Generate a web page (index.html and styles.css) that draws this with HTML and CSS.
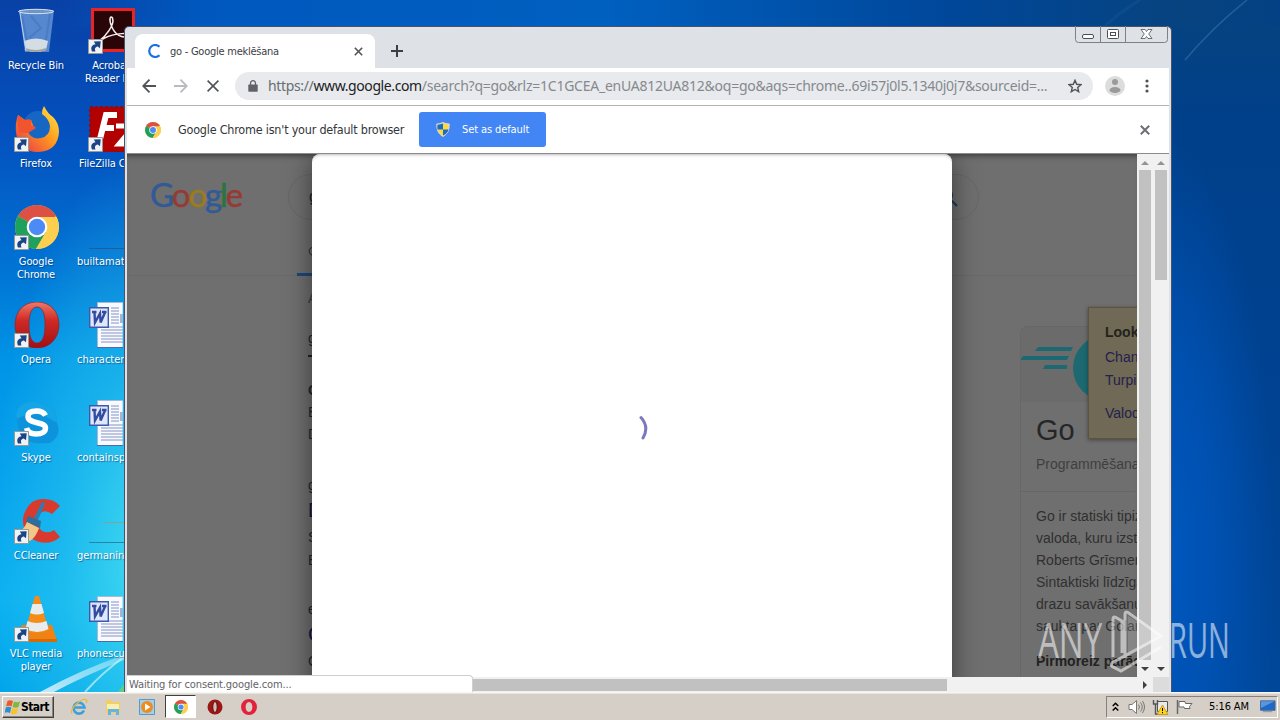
FILE: index.html
```html
<!DOCTYPE html>
<html lang="lv">
<head>
    <meta charset="UTF-8">
    <meta name="viewport" content="width=device-width, initial-scale=1.0">
    <title>go - Google meklēšana</title>
    <link rel="stylesheet" href="styles.css">
</head>
<body>
    <!-- shared icons -->
    <svg class="defs" width="0" height="0">
        <symbol id="i-shortcut" viewBox="0 0 15 15">
            <path d="M0.5 0.5h14v14h-14z" fill="#eef3f8" stroke="#9a9a94"/>
            <path d="M4 12.500C2.200 8.500 4 5.500 7.500 5.200L5.800 2.500l6.900-.2L12 9.300 9.800 7.500C6.800 8 6.500 10 7.500 12.500z" fill="#1c4484"/>
        </symbol>
        <symbol id="i-chrome" viewBox="0 0 44 44">
            <circle cx="22" cy="22" r="22" fill="#f8cd4a"/>
            <path d="M22 22L3 11A22 22 0 0 1 41.100 11z" fill="#dd5044"/>
            <path d="M22 22L3 11A22 22 0 0 0 21 44L31 27z" fill="#1fa15d"/>
            <path d="M22 12h19.500A22 22 0 0 1 21 44l10-17z" fill="#fcd04e"/>
            <circle cx="22" cy="22" r="10.300" fill="#fff"/>
            <circle cx="22" cy="22" r="8.200" fill="#4c8bf5"/>
        </symbol>
        <symbol id="i-word" viewBox="0 0 34 46">
            <path d="M8.500.5H34v45H8.500z" fill="#f8faff" stroke="#a9b8d8"/>
            <path d="M22 6h8M22 9h8M22 12h8M22 15h8M22 18h8M22 21h8M12 25h22M12 28h22M12 31h22M12 34h22M12 37h22M12 40h22" stroke="#8494c4"/>
            <path d="M31 12h3v9h-3z" fill="#a5b3d6"/>
            <path d="M8 45.500h26" stroke="#4d69aa"/>
            <path d="M.7 5.700h18.600v19.600H.7z" fill="#dfe7fa" stroke="#3d58ad" stroke-width="1.400"/>
            <path d="M3 10h4.500M13 10h4.500M5.500 10.500L6 20.500 11 11.500 11.600 20.500 16 10.500" fill="none" stroke="#334ca1" stroke-width="2.400"/>
        </symbol>
        <symbol id="i-magnifier" viewBox="0 0 20 20">
            <path d="M13 13l6 6M14 8A6 6 0 1 1 2 8a6 6 0 0 1 12 0z" fill="none" stroke="currentColor" stroke-width="2"/>
        </symbol>
    </svg>

    <div class="screen">
        <main class="desktop">
            <svg class="wallpaper" width="1280" height="692">
                <defs>
                    <linearGradient id="beam" x1="0" y1="1" x2="1" y2="0">
                        <stop offset="0" stop-color="#fff" stop-opacity=".75"/>
                        <stop offset="1" stop-color="#fff" stop-opacity=".3"/>
                    </linearGradient>
                </defs>
                <path d="M40 692Q80 670 124 655v5Q86 675 54 692z" fill="url(#beam)"/>
                <path d="M85 692Q103 672 124 657" fill="none" stroke="#c8f3fc" stroke-width="2" opacity=".7"/>
                <path d="M118 692l6-8v8z" fill="#5ad08c"/>
                <path d="M1247 0Q1212 28 1185 60" fill="none" stroke="#4d8cc2" stroke-width="1.500" opacity=".4"/>
                <path d="M1140 0Q1120 12 1105 26" fill="none" stroke="#3878b8" stroke-width="3" opacity=".15"/>
            </svg>

            <div class="icons">
                <div class="icon">
                    <svg class="pic" width="46" height="46" viewBox="0 0 46 46">
                        <path d="M5 2h35l-5 42H11z" fill="#6f9fdb" opacity=".75"/>
                        <path d="M8 8l6 30M36 6l-5 32M17 8l10 12-12 10" fill="none" stroke="#3e6fba" stroke-width="2" opacity=".5"/>
                        <path d="M10 33q12-5 24 0l-2 9q-10 4-20 0z" fill="#d5dde4"/>
                        <path d="M11 41q11 4 21 0" stroke="#a6a39c" stroke-width="2" fill="none"/>
                        <ellipse cx="22" cy="3.500" rx="17.500" ry="2.200" fill="#7095c6" stroke="#d7e4f2"/>
                        <path d="M6 5l6 38" stroke="#bdd3ee"/>
                    </svg>
                    <span>Recycle Bin</span>
                </div>
                <div class="icon">
                    <svg class="pic" width="46" height="46" viewBox="0 0 46 46">
                        <defs>
                            <linearGradient id="fox" x1="1" y1="0" x2="0" y2="1">
                                <stop offset="0" stop-color="#fff14a"/><stop offset=".45" stop-color="#ff9a1e"/><stop offset="1" stop-color="#e62a50"/>
                            </linearGradient>
                        </defs>
                        <circle cx="24" cy="20" r="15" fill="#1667c4"/>
                        <path d="M4 9l7 5 6 0 3 8-6 4q4 8 13 6 9-2 9-12Q35 13 28 8q0-5 2-8 4 8 9 11 6 6 6 15-1 19-21 20Q5 46 2 27 1 17 4 9z" fill="url(#fox)"/>
                        <path d="M4 9l7 5q5-2 7 1l-1 4q4 1 5 3l-8 5H6q-4-9-2-18z" fill="#f2542f"/>
                    </svg>
                    <svg class="shortcut"><use href="#i-shortcut"/></svg>
                    <span>Firefox</span>
                </div>
                <div class="icon">
                    <svg class="pic" width="46" height="46" viewBox="-1 -1 46 46"><use href="#i-chrome" width="44" height="44"/></svg>
                    <svg class="shortcut"><use href="#i-shortcut"/></svg>
                    <span>Google<br>Chrome</span>
                </div>
                <div class="icon">
                    <svg class="pic" width="46" height="46" viewBox="0 0 46 46">
                        <defs>
                            <linearGradient id="op" x1="0" y1="0" x2="0" y2="1">
                                <stop offset="0" stop-color="#ee7a68"/><stop offset=".4" stop-color="#cf2a25"/><stop offset="1" stop-color="#a30f12"/>
                            </linearGradient>
                        </defs>
                        <path fill-rule="evenodd" d="M23 0C37 0 45 10 45 23S36 46 23 46 1 36 1 23 9 0 23 0zM23 5c-6 0-8 8-8 18s2 18 8 18 8-8 8-18-2-18-8-18z" fill="url(#op)" stroke="#8a2330" stroke-width=".7"/>
                    </svg>
                    <svg class="shortcut"><use href="#i-shortcut"/></svg>
                    <span>Opera</span>
                </div>
                <div class="icon">
                    <svg class="pic" width="46" height="46" viewBox="0 0 46 46">
                        <path d="M14 2q6-2 11 1 18 1 18 20 3 7 0 13-5 9-15 7Q7 45 4 25-1 8 14 2z" fill="#0c93dc"/>
                        <path d="M14 2q6-2 11 1 18 1 18 20Q22 8 3 19 0 7 14 2z" fill="#14a5e6"/>
                        <path d="M31.500 15.500Q29 11 22.500 11C17 11 14 13 14 16.500c0 8 17.500 4.500 17.500 11.500 0 4-4 6-9 6-5.500 0-9-2-10-6" fill="none" stroke="#fff" stroke-width="5.500"/>
                    </svg>
                    <svg class="shortcut"><use href="#i-shortcut"/></svg>
                    <span>Skype</span>
                </div>
                <div class="icon">
                    <svg class="pic" width="46" height="46" viewBox="0 0 46 46">
                        <path d="M46 8L38 16Q30 10 25 17q-4 10 3 16 7 3 12-1l6 7Q37 47 25 44 8 38 9 20 14 0 30 1q10 0 16 7z" fill="#d93a2e"/>
                        <path d="M28 4l3 1-7 17-4-2z" fill="#287fb5"/>
                        <path d="M14 18l13 5-1 7-14-6z" fill="#2e6e9c"/>
                        <path d="M13 24l12 6q-3 9-9 13L2 36q8-4 11-12z" fill="#f3c786"/>
                    </svg>
                    <svg class="shortcut"><use href="#i-shortcut"/></svg>
                    <span>CCleaner</span>
                </div>
                <div class="icon">
                    <svg class="pic" width="46" height="46" viewBox="0 0 46 46">
                        <path d="M8 29h30l5 16H2z" fill="#ef8212"/>
                        <path d="M2 43h41v3H2z" fill="#d86a06"/>
                        <path d="M21 0h4l9.500 34q-11 6-23 0z" fill="#f58c17"/>
                        <path d="M18.500 8h9l2.500 9q-7 3-14 0zM13.500 25q9 4 19 0l2 8q-11 6-23 0z" fill="#e9ecef"/>
                    </svg>
                    <svg class="shortcut"><use href="#i-shortcut"/></svg>
                    <span>VLC media<br>player</span>
                </div>
            </div>

            <div class="icons second">
                <div class="icon">
                    <svg class="pic" width="46" height="46" viewBox="0 0 46 46">
                        <path d="M3.500 1.500h41v41h-41z" fill="#2a0507" stroke="#ed2224" stroke-width="3"/>
                        <path d="M10 33c6-4 16-16 13.500-23-2-3-4 1-1 8 3 8 10 13 17 10 4-4-14-3-24 2-7 4-8 7-5 6z" fill="none" stroke="#f6efef" stroke-width="1.500"/>
                    </svg>
                    <svg class="shortcut"><use href="#i-shortcut"/></svg>
                    <span>Acrobat<br>Reader DC</span>
                </div>
                <div class="icon">
                    <svg class="pic" width="46" height="46" viewBox="0 0 46 46">
                        <path d="M1 1h45v45H1z" fill="#b30000" stroke="#8e0c12" stroke-dasharray="3 2" stroke-width="2"/>
                        <path d="M28 9H17L10 37M14 22h11" fill="none" stroke="#fff" stroke-width="6"/>
                        <path d="M27 20h18L30 38h16" fill="none" stroke="#fff" stroke-width="5"/>
                    </svg>
                    <svg class="shortcut"><use href="#i-shortcut"/></svg>
                    <span class="filezilla">FileZilla Client</span>
                </div>
                <div class="icon doc">
                    <svg class="pic" width="46" height="46"><path d="M0 44.500h46" stroke="#1c5f9b"/></svg>
                    <span>builtamateur.r</span>
                </div>
                <div class="icon doc">
                    <svg class="pic" width="34" height="46"><use href="#i-word"/></svg>
                    <span>characterpr.</span>
                </div>
                <div class="icon doc">
                    <svg class="pic" width="34" height="46"><use href="#i-word"/></svg>
                    <span>containspubli</span>
                </div>
                <div class="icon doc">
                    <svg class="pic" width="46" height="46"><path d="M14 24.500h32" stroke="#7da69b"/><path d="M0 44.500h46" stroke="#2585ab"/></svg>
                    <span>germaninter</span>
                </div>
                <div class="icon doc">
                    <svg class="pic" width="34" height="46"><use href="#i-word"/></svg>
                    <span>phonescultur</span>
                </div>
            </div>

            <section class="window">
                <header class="tabstrip">
                    <div class="tab">
                        <svg width="14" height="14" viewBox="0 0 14 14"><path d="M11.500 2.800A6 6 0 1 0 11.500 11.200" fill="none" stroke="#1d6fe0" stroke-width="2.200"/></svg>
                        <span class="tab-title">go - Google meklēšana</span>
                        <svg width="9" height="9" viewBox="0 0 9 9"><path d="M.8.8l7.400 7.400M8.200.8L.8 8.200" stroke="#505357" stroke-width="1.600"/></svg>
                    </div>
                    <svg class="new-tab" width="12" height="12" viewBox="0 0 12 12"><path d="M6 0v12M0 6h12" stroke="#3c4043" stroke-width="2"/></svg>
                    <svg class="controls" width="93" height="18" viewBox="0 0 93 18">
                        <path d="M.5 0v13.500q0 3 3 3h86q3 0 3-3V0M25.500 0v16.500M50.500 0v16.500" fill="none" stroke="#7d8187"/>
                        <rect x="7.500" y="8.500" width="11" height="4" rx="1.500" fill="#fff" stroke="#4b4f55"/>
                        <rect x="32.500" y="3.500" width="11" height="9" rx="1" fill="#fff" stroke="#4b4f55"/>
                        <rect x="35.500" y="6.500" width="5" height="3" fill="#fff" stroke="#4b4f55"/>
                        <path d="M66 3.500h4L71.500 5.500l1.500-2h4l-3.300 4.500 3.300 4.500h-4L71.500 10.500l-1.500 2h-4l3.300-4.500z" fill="#fff" stroke="#4b4f55" stroke-width=".8"/>
                    </svg>
                </header>

                <nav class="toolbar">
                    <svg width="14" height="14" viewBox="0 0 14 14"><path d="M14 7H1.500M7.500.7L1.200 7l6.300 6.300" fill="none" stroke="#505357" stroke-width="1.800"/></svg>
                    <svg width="14" height="14" viewBox="0 0 14 14"><path d="M0 7h12.500M6.500.7L12.800 7l-6.300 6.300" fill="none" stroke="#b9bbbe" stroke-width="1.800"/></svg>
                    <svg width="12" height="12" viewBox="0 0 12 12"><path d="M.6.600l10.800 10.800M11.400.6L.6 11.400" stroke="#505357" stroke-width="1.600"/></svg>
                    <div class="omnibox">
                        <svg width="10" height="12" viewBox="0 0 10 12"><path d="M1 4.500h8q.7 0 .7.700V11q0 .8-.7.8H1q-.7 0-.7-.8V5.200q0-.7.7-.7z" fill="#5f6368"/><path d="M2.500 5V3.200a2.500 2.500 0 0 1 5 0V5" fill="none" stroke="#5f6368" stroke-width="1.300"/></svg>
                        <span class="url"><i class="scheme">https://</i><b>www.google.com</b><i class="path">/search?q=go&amp;rlz=1C1GCEA_enUA812UA812&amp;oq=go&amp;aqs=chrome..69i57j0l5.1340j0j7&amp;sourceid=...</i></span>
                        <svg width="14" height="14" viewBox="0 0 14 14"><path d="M7 1.300l1.700 4 4.300.4-3.300 2.800 1 4.200L7 10.500l-3.700 2.200 1-4.200L1 5.700l4.300-.4z" fill="none" stroke="#505357" stroke-width="1.400"/></svg>
                    </div>
                    <svg class="avatar" width="20" height="20" viewBox="0 0 20 20"><circle cx="10" cy="10" r="10" fill="#dcdcdc"/><circle cx="10" cy="6" r="3" fill="#9a9a9a"/><ellipse cx="10" cy="14" rx="5.500" ry="3" fill="#9a9a9a"/></svg>
                    <svg class="menu-dots" width="4" height="14" viewBox="0 0 4 14"><circle cx="2" cy="2" r="1.600" fill="#505357"/><circle cx="2" cy="7" r="1.600" fill="#505357"/><circle cx="2" cy="12" r="1.600" fill="#505357"/></svg>
                </nav>

                <div class="infobar">
                    <svg width="16" height="16"><use href="#i-chrome"/></svg>
                    <span class="info-text">Google Chrome isn't your default browser</span>
                    <button class="set-default">
                        <svg width="14" height="15" viewBox="0 0 14 15">
                            <path d="M7 .5Q4 2 .8 2 .3 11 7 14.500 13.700 11 13.200 2 10 2 7 .5z" fill="#ffd93b" stroke="#d5dbe6"/>
                            <path d="M7 1.500V7.500H1.500Q1.200 5 1.500 2.800 4.500 2.600 7 1.500zM7 7.500h5.500Q11.500 11.500 7 13.500z" fill="#1a6cc8"/>
                        </svg>
                        <span>Set as default</span>
                    </button>
                    <svg class="info-close" width="10" height="10" viewBox="0 0 10 10"><path d="M.8.8l8.400 8.400M9.200.8L.8 9.200" stroke="#6c6f73" stroke-width="2"/></svg>
                </div>

                <div class="viewport">
                    <div class="page">
                        <div class="page-header">
                            <div class="logo"><span class="g-blue">G</span><span class="g-red">o</span><span class="g-yellow">o</span><span class="g-blue">g</span><span class="g-green">l</span><span class="g-red">e</span></div>
                            <div class="search"><span>go</span><svg width="20" height="20"><use href="#i-magnifier"/></svg></div>
                            <div class="search-tabs"><svg width="13" height="13"><use href="#i-magnifier"/></svg></div>
                        </div>
                        <div class="page-body">
                            <div class="results">
                                <p class="stats">Aptuveni</p>
                                <p class="cite first">golang.org</p>
                                <div class="rule"></div>
                                <p class="strong">Go</p>
                                <p class="snippet">Build fast</p>
                                <p class="snippet">Download</p>
                                <p class="cite second-hit">golang.org</p>
                                <p class="heading">Downloads</p>
                                <p class="snippet s1">Source</p>
                                <p class="snippet s2">Binary</p>
                                <p class="cite third-hit">en.wikipedia.org</p>
                                <p class="heading">Go</p>
                                <p class="snippet strong-snippet">Go</p>
                            </div>
                            <aside class="panel">
                                <div class="panel-picture">
                                    <svg width="116" height="76" viewBox="0 0 116 76"><path d="M17 20h35l-2 4H14zM2 29h46l-2 4H-1zM24 38h22v4H22z" fill="#1d6971"/><circle cx="85" cy="41" r="33" fill="#1d6971"/></svg>
                                </div>
                                <div class="panel-title">
                                    <h2>Go</h2>
                                    <p>Programmēšana</p>
                                </div>
                                <div class="panel-text">
                                    <p>Go ir statiski tipizēta<br>valoda, kuru izstrādāja<br>Roberts Grīsmers, Robs<br>Sintaktiski līdzīga valodai<br>drazu savākšanu, un<br>saukta par Golang</p>
                                    <p class="released">Pirmoreiz parādījās</p>
                                </div>
                            </aside>
                        </div>
                        <div class="notice">
                            <b>Looking for</b>
                            <span>Change to English</span>
                            <span>Turpināt latviešu</span>
                            <span class="lang">Valodas iestatījumi</span>
                        </div>
                        <div class="dialog">
                            <svg width="12" height="26" viewBox="0 0 12 26"><path d="M4 2.500Q12.500 12 6 23" fill="none" stroke="#7c79bf" stroke-width="3" stroke-linecap="round"/></svg>
                        </div>
                    </div>
                    <div class="vbar inner"><i class="up"></i><div class="thumb"></div><i class="down"></i></div>
                    <div class="vbar outer"><i class="up"></i><div class="thumb"></div><i class="down"></i></div>
                </div>

                <div class="hbar"><div class="thumb"></div><i class="right"></i><div class="corner"></div></div>
                <div class="status">Waiting for consent.google.com...</div>
            </section>

            <!-- watermark -->
            <div class="watermark">
                <span>ANY</span>
                <svg width="58" height="64" viewBox="0 0 58 64"><path d="M4 47V9q0-3 3-1.500L13 11v32M16 48V4q0-3 3-1.500L52 26 3 53q-2 3 1 4l8 4 40-24" fill="none" stroke="#fff" stroke-width="3"/><path d="M19 6l33 21L19 46z" fill="#fff" opacity=".3"/></svg>
                <span class="run">RUN</span>
            </div>
        </main>

        <footer class="taskbar">
            <div class="start">
                <svg width="16" height="16" viewBox="0 0 16 16"><path d="M2.500 2Q5 .5 8 2L6.500 7.500Q4 6 1 7.500z" fill="#ee5a24"/><path d="M9 2.500q3 1.500 6 0L13.500 8q-3 1.500-6 0z" fill="#7eb93d"/><path d="M.8 8.500q3-1.500 5.500 0L5 14q-3-1.500-5.500 0z" fill="#2b8fd8"/><path d="M7 9q3 1.500 6.200 0l-1.500 5.500q-3 1.500-6 0z" fill="#fbc02d"/></svg>
                <span>Start</span>
            </div>
            <div class="task first">
                <svg width="18" height="18" viewBox="0 0 18 18"><path d="M14 12.500A5.500 5.500 0 1 1 14.500 9.500H4.500" fill="none" stroke="#3ba0dc" stroke-width="2.600"/><path d="M2 15.500C-1 11 12-1 16.500 2q1 1-.5 3" fill="none" stroke="#e8b93b" stroke-width="1.300"/></svg>
            </div>
            <div class="task">
                <svg width="18" height="18" viewBox="0 0 18 18"><path d="M2 2h5l2 2h7v11H2z" fill="#f0cf67"/><path d="M3 6h12v5H3z" fill="#fbeeb1"/><path d="M4 11h11v6h-3v-3H7v3H4z" fill="#67b5df"/></svg>
            </div>
            <div class="task">
                <svg width="18" height="18" viewBox="0 0 18 18"><path d="M1.500 1.500h15v15h-15z" fill="#9fd0ee" stroke="#5898c6"/><circle cx="9" cy="9" r="6" fill="#f18a1c"/><path d="M7 5.500L12.500 9 7 12.500z" fill="#fff"/></svg>
            </div>
            <div class="task active"><svg width="14" height="14"><use href="#i-chrome"/></svg></div>
            <div class="task">
                <svg width="16" height="16" viewBox="0 0 16 16"><circle cx="8" cy="8" r="7.500" fill="#9d1616"/><ellipse cx="8" cy="8" rx="2.200" ry="5.500" fill="#d7bcb6" stroke="#5d0b0b"/></svg>
            </div>
            <div class="task">
                <svg width="16" height="16" viewBox="0 0 16 16"><path fill-rule="evenodd" d="M8 0a8 8 0 1 1 0 16A8 8 0 0 1 8 0zM8 3C3.500 3 3.500 13 8 13s4.500-10 0-10z" fill="#e3213c"/></svg>
            </div>
            <div class="tray">
                <svg width="7" height="10" viewBox="0 0 7 10"><path d="M.7 4l2.800-2.700L6.300 4M.7 8.500l2.800-2.700 2.800 2.700" fill="none" stroke="#000" stroke-width="1.500"/></svg>
                <svg class="speaker" width="17" height="16" viewBox="0 0 17 16"><path d="M1 5.500h3L8.500 1.500v13L4 10.500H1z" fill="#fff" stroke="#777"/><path d="M10.500 5.500q2 2.500 0 5M12.500 3.500q3.500 4.500 0 9M14.500 2q4 6 0 12" fill="none" stroke="#777"/></svg>
                <svg class="net" width="17" height="16" viewBox="0 0 17 16"><path d="M5.500 2.500h10v10h-10z" fill="#e9e9e9" stroke="#555"/><path d="M1.500 1v4h4V1M3.500 5v10h3" fill="none" stroke="#555" stroke-width="1.400"/><path d="M10.500 6l5.500 9.500H5z" fill="#ffd21c" stroke="#b38a00" stroke-width=".7"/><path d="M10.500 9v3M10.500 13v1.200" stroke="#000"/></svg>
                <svg class="flag" width="17" height="16" viewBox="0 0 17 16"><path d="M1.500 1v14" stroke="#666" stroke-width="1.500"/><path d="M3 2.500h6l.5 2h6.500l-2.500 3 .5 2H8.500L8 8H3z" fill="#fff" stroke="#666"/></svg>
                <span class="clock">5:16 AM</span>
                <svg class="show" width="16" height="13" viewBox="0 0 17 13"><path d="M.5.5h15.500v10H.5z" fill="#1f68c8" stroke="#46678f"/><path d="M1 1h14.500L1 8z" fill="#5896df"/><path d="M3 12h10" stroke="#83909c"/></svg>
            </div>
        </footer>
    </div>
</body>
</html>
```

FILE: styles.css
```css
* {
    box-sizing: border-box;
}

body {
    margin: 0;
    width: 1280px;
    height: 720px;
    overflow: hidden;
    font-family: "DejaVu Sans Condensed", "DejaVu Sans", sans-serif;
    font-stretch: condensed;
    font-size: 11px;
}

p, h2 {
    margin: 0;
}

i {
    font-style: normal;
}

svg {
    display: block;
    flex: none;
}

.defs {
    position: absolute;
}

.screen {
    display: grid;
    grid-template-rows: 692px 28px;
    height: 720px;
}

/* desktop */
.desktop {
    position: relative;
    display: flex;
    overflow: hidden;
    background:
        linear-gradient(90deg, rgba(0, 96, 192, 0) 60px, #0058be 200px, #0060c0 600px, #00479a 950px, #07437f 1180px, #044184 1280px) 0 0 / 1280px 26px no-repeat,
        radial-gradient(ellipse 110px 420px at 1165px 560px, #0058be 0, rgba(0, 82, 180, .85) 50%, rgba(0, 70, 155, 0) 100%),
        linear-gradient(180deg, #07437f 0, #00408a 120px, #00418f 300px, #004799 692px) 1100px 0 / 180px 692px no-repeat,
        radial-gradient(ellipse 150px 400px at 140px 560px, rgba(75, 226, 240, .8) 0, rgba(50, 205, 240, .45) 50%, rgba(0, 150, 230, 0) 100%),
        linear-gradient(180deg, #0941a6 0, #0450be 130px, #0074d4 270px, #0094e6 360px, #05a1ec 480px, #0cb0f0 600px, #00a4ea 692px);
}

.wallpaper {
    position: absolute;
    top: 0;
    left: 0;
}

.icons {
    display: grid;
    grid-auto-rows: 98px;
    width: 72px;
    padding-top: 8px;
}

.icons.second {
    margin-left: 1px;
    width: 76px;
}

.icon {
    position: relative;
    display: flex;
    flex-direction: column;
    align-items: center;
    color: #fff;
    line-height: 13px;
    letter-spacing: -.1px;
    text-align: center;
    white-space: nowrap;
    text-shadow: 1px 1px 1px rgba(0, 30, 80, .5);
}

.icon .pic {
    margin: 0 0 5px 2px;
}

.doc {
    align-items: flex-start;
}

.icons.second .doc .pic {
    margin-left: 16px;
}

.doc span {
    margin-left: 4px;
    letter-spacing: 0;
}

.filezilla {
    margin-left: 4px;
}

.shortcut {
    position: absolute;
    left: 14px;
    top: 31px;
    width: 15px;
    height: 15px;
}

.second .shortcut {
    left: 15px;
}

/* browser window */
.window {
    position: absolute;
    left: 124px;
    top: 26px;
    width: 1048px;
    height: 666px;
    display: flex;
    flex-direction: column;
    background: #dee1e6;
    border: 1px solid #46536a;
    border-bottom: 0;
    border-radius: 5px 5px 0 0;
    padding: 1px 2px 0;
}

.tabstrip {
    display: flex;
    height: 40px;
    flex: none;
}

.tab {
    display: flex;
    align-items: center;
    width: 240px;
    height: 34px;
    margin: 6px 0 0 8px;
    padding: 0 12px 0 13px;
    background: #fff;
    border-radius: 8px 8px 0 0;
    color: #3c4043;
}

.tab-title {
    flex: 1;
    margin-left: 8px;
    letter-spacing: -.25px;
}

.new-tab {
    margin: 17px 0 0 16px;
}

.controls {
    margin: -2px 1px 0 auto;
}

.toolbar {
    display: flex;
    align-items: center;
    height: 38px;
    flex: none;
    padding: 0 0 2px 15px;
    background: #fff;
    border-bottom: 1px solid #b4b4b4;
}

.toolbar > svg + svg {
    margin-left: 18px;
}

.toolbar > svg:nth-child(3) {
    margin-left: 19px;
}

.omnibox {
    display: flex;
    align-items: center;
    flex: none;
    width: 858px;
    height: 28px;
    margin-left: 16px;
    padding: 0 11px 0 13px;
    background: #e8eaed;
    border-radius: 14px;
}

.url {
    flex: 1;
    margin-left: 10px;
    font: 14px "Noto Sans", sans-serif;
    letter-spacing: -.25px;
    color: #85898e;
    white-space: nowrap;
}

.url b {
    font-weight: 400;
    color: #202124;
    letter-spacing: -.4px;
}

.url .scheme {
    color: #696d72;
    letter-spacing: -.35px;
}

.toolbar .avatar {
    margin-left: 12px;
}

.toolbar .menu-dots {
    margin-left: 20px;
}

.infobar {
    display: flex;
    align-items: center;
    height: 48px;
    flex: none;
    padding: 0 19px 0 18px;
    background: #fff;
    border-bottom: 1px solid #8c8c8c;
    color: #333639;
}

.info-text {
    width: 229px;
    margin: 0 12px 0 17px;
    font-size: 12.5px;
    letter-spacing: -.22px;
    white-space: nowrap;
}

.set-default {
    display: flex;
    align-items: center;
    width: 127px;
    height: 35px;
    padding: 0 0 0 17px;
    border: 0;
    border-radius: 3px;
    background: #4285f4;
    color: #fff;
    font: inherit;
    white-space: nowrap;
}

.set-default span {
    margin-left: 12px;
    letter-spacing: -.1px;
}

.info-close {
    margin-left: auto;
}

/* dimmed page */
.viewport {
    display: flex;
    height: 523px;
    flex: none;
    background: #f1f1f1;
}

.page {
    position: relative;
    width: 1010px;
    overflow: hidden;
    background: #6f6f6f;
    box-shadow: inset 0 6px 6px -5px #333;
    font-family: "Liberation Sans", sans-serif;
}

.page-header {
    display: grid;
    grid-template-columns: 161px 691px;
    grid-template-rows: 88px 34px;
    height: 122px;
    border-bottom: 1px solid #686868;
}

.logo {
    padding: 19px 0 0 23px;
    font: 33px/42px "Lato", sans-serif;
    letter-spacing: -2.1px;
    -webkit-text-stroke: .5px;
}

.g-blue {
    color: #315a96;
}

.g-red {
    color: #963b34;
}

.g-yellow {
    color: #9a7c1e;
}

.g-green {
    color: #2a7440;
}

.search {
    display: flex;
    align-items: center;
    justify-content: space-between;
    height: 46px;
    margin-top: 20px;
    padding: 0 20px;
    border: 1px solid #676767;
    border-radius: 23px;
    font-size: 16px;
    color: #222;
}

.search svg {
    color: #1d3663;
}

.search-tabs {
    grid-column: 2;
    width: 60px;
    margin-left: 9px;
    padding: 4px 0 0 11px;
    border-bottom: 3px solid #1d4780;
    color: #3b3b3b;
}

.page-body {
    display: flex;
    justify-content: space-between;
}

.results {
    width: 600px;
    padding: 11px 0 0 181px;
    color: #252525;
    font-size: 14px;
    line-height: 22px;
}

.stats {
    color: #3d3d3d;
}

.cite.first {
    margin-top: 18px;
}

.rule {
    width: 60px;
    height: 2px;
    margin: 6px 0 12px;
    background: #202020;
}

.results .strong {
    margin-top: 22px;
    font-weight: 700;
}

.cite.second-hit {
    margin-top: 29px;
}

.heading {
    color: #15133f;
    font-size: 20px;
    line-height: 28px;
}

.s1 {
    margin-top: 2px;
}

.s2 {
    margin-top: 1px;
}

.cite.third-hit {
    margin-top: 27px;
}

.strong-snippet {
    margin-top: 2px;
}

.panel {
    width: 117px;
    height: 500px;
    margin-top: 50px;
    border: 1px solid #676767;
    border-right: 0;
    border-radius: 8px 0 0 0;
    overflow: hidden;
    white-space: nowrap;
}

.panel-picture {
    height: 75px;
    background: #6b6b6b;
    overflow: hidden;
}

.panel-title {
    height: 90px;
    padding: 10px 0 0 15px;
    border-bottom: 1px solid #676767;
    color: #3f3f3f;
    font-size: 14px;
}

.panel-title h2 {
    height: 44px;
    color: #262626;
    font: 29px/36px "Liberation Sans", sans-serif;
}

.panel-text {
    padding: 13px 0 0 15px;
    color: #303030;
    font-size: 14px;
    line-height: 22px;
}

.released {
    margin-top: 13px;
    color: #222;
    font-weight: 700;
}

/* language notice */
.notice {
    position: absolute;
    left: 961px;
    top: 153px;
    width: 220px;
    height: 132px;
    display: flex;
    flex-direction: column;
    padding: 13px 0 0 16px;
    background: #6f6955;
    border: 1px solid #5b5340;
    box-shadow: 0 1px 4px rgba(0, 0, 0, .4);
    color: #24214e;
    font-size: 14px;
    line-height: 23px;
}

.notice b {
    margin-bottom: 2px;
    color: #24221d;
}

.notice .lang {
    margin-top: 10px;
}

.dialog {
    position: absolute;
    left: 185px;
    top: 0;
    width: 640px;
    height: 540px;
    display: flex;
    padding: 261px 0 0 325px;
    background: #fff;
    border-radius: 8px 8px 0 0;
    box-shadow: 0 4px 26px 0 rgba(0, 0, 0, .5), inset 0 3px 3px -2px #bbb;
}

/* scrollbars */
.vbar {
    display: flex;
    flex-direction: column;
    width: 16px;
    padding: 7px 2px 6px;
}

.vbar i {
    width: 0;
    height: 0;
    margin: 0 2px;
    border: 4px solid transparent;
}

.vbar .up {
    border-top: 0;
    border-bottom-color: #939393;
}

.vbar .down {
    margin-top: auto;
    border-bottom: 0;
    border-top-color: #404040;
}

.vbar .thumb {
    width: 12px;
    height: 490px;
    margin-top: 5px;
    background: #c1c1c1;
}

.vbar.outer .thumb {
    height: 110px;
}

.hbar {
    display: flex;
    align-items: center;
    height: 15px;
    flex: none;
    background: #f1f1f1;
}

.hbar .thumb {
    width: 804px;
    height: 12px;
    margin-left: 16px;
    background: #c1c1c1;
}

.hbar .right {
    margin-left: auto;
    margin-right: 6px;
    border: 4px solid transparent;
    border-right: 0;
    border-left-color: #404040;
}

.hbar .corner {
    width: 16px;
    height: 15px;
    background: #dcdcdc;
}

.status {
    position: absolute;
    left: 2px;
    bottom: 0;
    width: 346px;
    height: 17px;
    padding-left: 2px;
    background: #fff;
    border: 1px solid #cfcfcf;
    border-left: 0;
    border-bottom: 0;
    border-radius: 0 4px 0 0;
    color: #5f6368;
    letter-spacing: -.12px;
    line-height: 17px;
}

.watermark {
    position: absolute;
    left: 1038px;
    top: 609px;
    display: flex;
    align-items: center;
    color: #fff;
    opacity: .55;
}

.watermark span {
    width: 63px;
    padding-bottom: 5px;
    font: 50px/60px "Open Sans", sans-serif;
    transform: scaleX(.66);
    transform-origin: 0 0;
}

.watermark .run {
    transform: scaleX(.58);
}

.watermark svg {
    margin: 0 2px 0 8px;
}

/* taskbar */
.taskbar {
    display: flex;
    align-items: center;
    background: #d6cfc7;
    border-top: 1px solid #f8f6f2;
    box-shadow: inset 0 1px #e8e4de;
}

.start {
    display: flex;
    align-items: center;
    width: 52px;
    height: 22px;
    margin: 1px 0 0 2px;
    padding-left: 2px;
    border: 1px solid;
    border-color: #fff #404040 #404040 #fff;
    box-shadow: inset -1px -1px #8a857d;
    font-weight: 700;
    font-size: 12px;
    letter-spacing: -.6px;
}

.task {
    display: flex;
    align-items: center;
    justify-content: center;
    width: 34px;
    height: 23px;
}

.task.first {
    margin-left: 8px;
}

.task.active {
    width: 31px;
    margin: 0 2px 0 1px;
    background: #fff;
    border: 1px solid;
    border-color: #404040 #fff #fff #404040;
}

.tray {
    display: flex;
    align-items: center;
    width: 172px;
    height: 22px;
    margin: 0 2px 0 auto;
    padding-left: 5px;
    border: 1px solid;
    border-color: #86817a #fff #fff #86817a;
}

.speaker {
    margin-left: 9px;
}

.net {
    margin-left: 7px;
}

.flag {
    margin-left: 7px;
}

.clock {
    width: 41px;
    margin: 0 10px 0 16px;
    letter-spacing: -.1px;
    white-space: nowrap;
}
```
